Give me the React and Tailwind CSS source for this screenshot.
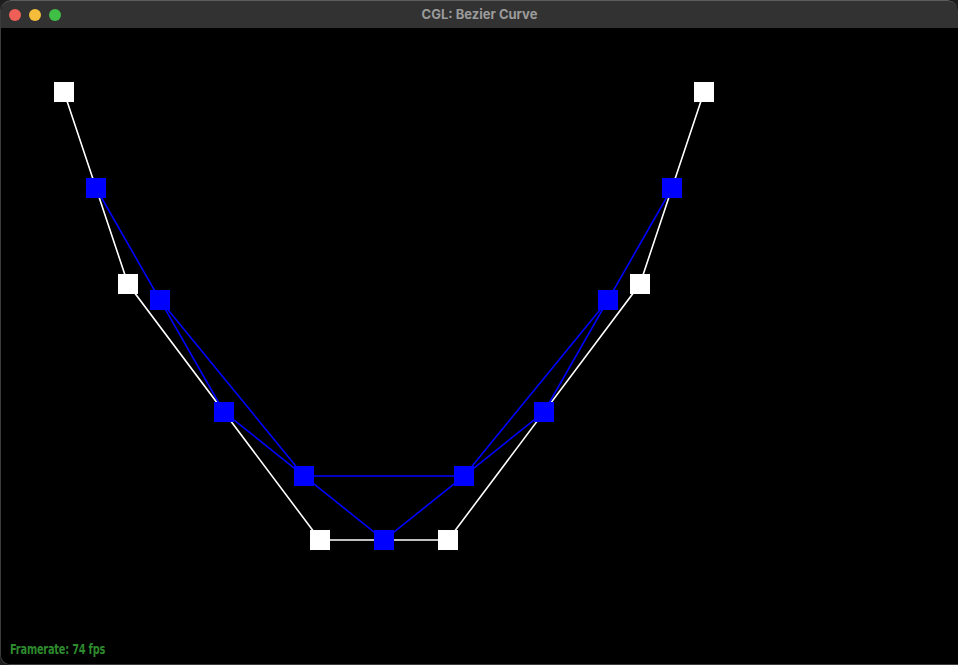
const white = [
  [64, 92],
  [128, 284],
  [320, 540],
  [448, 540],
  [640, 284],
  [704, 92],
];

const mid = (a, b) => [(a[0] + b[0]) / 2, (a[1] + b[1]) / 2];

function level(points) {
  const out = [];
  for (let i = 0; i < points.length - 1; i++) out.push(mid(points[i], points[i + 1]));
  return out;
}

const blue1 = level(white);
const blue2 = level(blue1);

const toPoints = (pts) => pts.map((p) => p.join(",")).join(" ");

function Squares({ pts, fill }) {
  return pts.map(([x, y], i) => (
    <rect key={i} x={x - 10} y={y - 10} width="20" height="20" fill={fill} />
  ));
}

export default function App() {
  return (
    <div className="w-[958px] h-[665px] bg-[#1e1e1e] overflow-hidden">
      <div className="w-full h-full flex flex-col rounded-t-[10px] rounded-bl-[10px] border-l border-b border-[#3c3c3c] overflow-hidden bg-black">
        <div className="h-[28px] shrink-0 bg-[#323232] border-t border-[#5c5c5c] rounded-t-[10px] flex items-center relative">
          <div className="flex items-center gap-[8px] pl-[8px]">
            <span className="w-[12px] h-[12px] rounded-full bg-[#ee5f57]" />
            <span className="w-[12px] h-[12px] rounded-full bg-[#f5bd3a]" />
            <span className="w-[12px] h-[12px] rounded-full bg-[#3fbf45]" />
          </div>
          <div className="absolute inset-0 flex items-center justify-center text-[13px] font-bold text-[#9b9b9b] font-['Inter','Liberation_Sans',sans-serif]">
            CGL: Bezier Curve
          </div>
        </div>
        <div className="relative flex-1 bg-black">
          {/* viewBox starts at x=1 so points line up with the outer window despite the 1px border */}
          <svg width="957" height="636" viewBox="1 28 957 636" className="block">
            <polyline points={toPoints(white)} fill="none" stroke="#ffffff" strokeWidth="1.6" />
            <polyline points={toPoints(blue1)} fill="none" stroke="#0000ff" strokeWidth="1.6" />
            <polyline points={toPoints(blue2)} fill="none" stroke="#0000ff" strokeWidth="1.6" />
            <Squares pts={white} fill="#ffffff" />
            <Squares pts={blue1} fill="#0000ff" />
            <Squares pts={blue2} fill="#0000ff" />
          </svg>
          <div className="absolute left-[9px] bottom-[8px] origin-left scale-x-[0.7] text-[14px] leading-none font-bold text-[#2d8a2d] font-['DejaVu_Sans',sans-serif] tracking-[-0.3px]">
            Framerate: 74 fps
          </div>
        </div>
      </div>
    </div>
  );
}
